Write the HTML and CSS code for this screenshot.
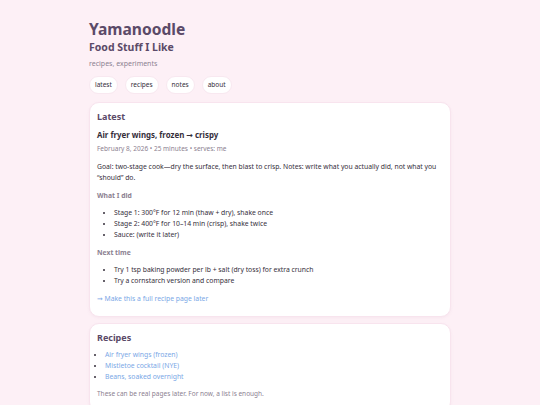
FILE: index.html
```html
<!DOCTYPE html>
<html lang="en">
<head>
    <meta charset="UTF-8">
    <meta name="viewport" content="width=device-width, initial-scale=1.0">
    <title>Yamanoodle</title>
    <link rel="stylesheet" href="styles.css">
</head>
<body>
    <div class="wrap">
        <header class="site-head">
            <h1 class="site-title">Yamanoodle</h1>
            <p class="site-sub">Food Stuff I Like</p>
            <p class="site-tags">recipes, experiments</p>
            <nav class="nav">
                <a href="#latest" class="pill">latest</a>
                <a href="#recipes" class="pill">recipes</a>
                <a href="#notes" class="pill">notes</a>
                <a href="#about" class="pill">about</a>
            </nav>
        </header>

        <section class="card" id="latest">
            <h2 class="card-title">Latest</h2>
            <h3 class="post-title">Air fryer wings, frozen → crispy</h3>
            <p class="meta">February 8, 2026 • 25 minutes • serves: me</p>
            <p class="text">Goal: two-stage cook—dry the surface, then blast to crisp. Notes: write what you actually did, not what you “should” do.</p>

            <h4 class="label">What I did</h4>
            <ul class="steps">
                <li>Stage 1: 300°F for 12 min (thaw + dry), shake once</li>
                <li>Stage 2: 400°F for 10–14 min (crisp), shake twice</li>
                <li>Sauce: (write it later)</li>
            </ul>

            <h4 class="label">Next time</h4>
            <ul class="steps">
                <li>Try 1 tsp baking powder per lb + salt (dry toss) for extra crunch</li>
                <li>Try a cornstarch version and compare</li>
            </ul>

            <a href="#" class="more">→ Make this a full recipe page later</a>
        </section>

        <section class="card" id="recipes">
            <h2 class="card-title">Recipes</h2>
            <ul class="links">
                <li><a href="#">Air fryer wings (frozen)</a></li>
                <li><a href="#">Mistletoe cocktail (NYE)</a></li>
                <li><a href="#">Beans, soaked overnight</a></li>
            </ul>
            <p class="note">These can be real pages later. For now, a list is enough.</p>
        </section>
    </div>
</body>
</html>
```

FILE: styles.css
```css
/* page */
body {
    margin: 0;
    background: #fdf0f6;
    color: #352e3a;
    font-family: "Noto Sans", "DejaVu Sans", sans-serif;
    font-size: 6.8px;
    line-height: 11px;
}

.wrap {
    width: 362px;
    margin: 0 auto;
    padding: 18px 0 20px;
}

/* header */
.site-title {
    margin: 0;
    font-size: 15.6px;
    line-height: 22px;
    color: #5b4a68;
}

.site-sub {
    margin: 0;
    font-size: 10.5px;
    font-weight: bold;
    line-height: 14px;
    color: #5b4a68;
}

.site-tags {
    margin: 5px 0 0;
    font-size: 7px;
    line-height: 10px;
    color: #8c8191;
}

.nav {
    display: flex;
    gap: 7px;
    margin-top: 7px;
}

.pill {
    display: inline-block;
    padding: 3px 5px;
    background: #fff;
    border: 1px solid #f8e8f0;
    border-radius: 999px;
    color: #352e3a;
    text-decoration: none;
    font-size: 6.5px;
    line-height: 10px;
}

/* cards */
.card {
    margin-top: 8px;
    padding: 5px 7px 12px;
    background: #fff;
    border: 1px solid #f8e4ee;
    border-radius: 10px;
    box-shadow: 0 1px 3px rgba(200, 150, 180, 0.1);
}

.card + .card {
    margin-top: 6px;
}

.card-title {
    margin: 0;
    font-size: 9px;
    line-height: 18px;
    color: #5b4a68;
}

.post-title {
    margin: 3px 0 0;
    font-size: 7.9px;
    line-height: 12px;
    color: #352e3a;
}

.meta {
    margin: 3px 0 0;
    font-size: 6.5px;
    line-height: 10px;
    color: #8c8191;
}

.text {
    margin: 7px 0 0;
}

.label {
    margin: 6.5px 0 0;
    font-size: 6.8px;
    color: #8c8191;
}

.steps {
    margin: 6.5px 0 0;
    padding-left: 17px;
}

.more {
    display: block;
    margin-top: 6.5px;
    color: #7aa7e6;
    text-decoration: none;
}

.links {
    margin: 2.5px 0 0;
    padding-left: 8px;
}

.links a {
    color: #7aa7e6;
    text-decoration: none;
}

.note {
    margin: 6.5px 0 0;
    font-size: 6.5px;
    line-height: 10px;
    color: #8c8191;
}
```
